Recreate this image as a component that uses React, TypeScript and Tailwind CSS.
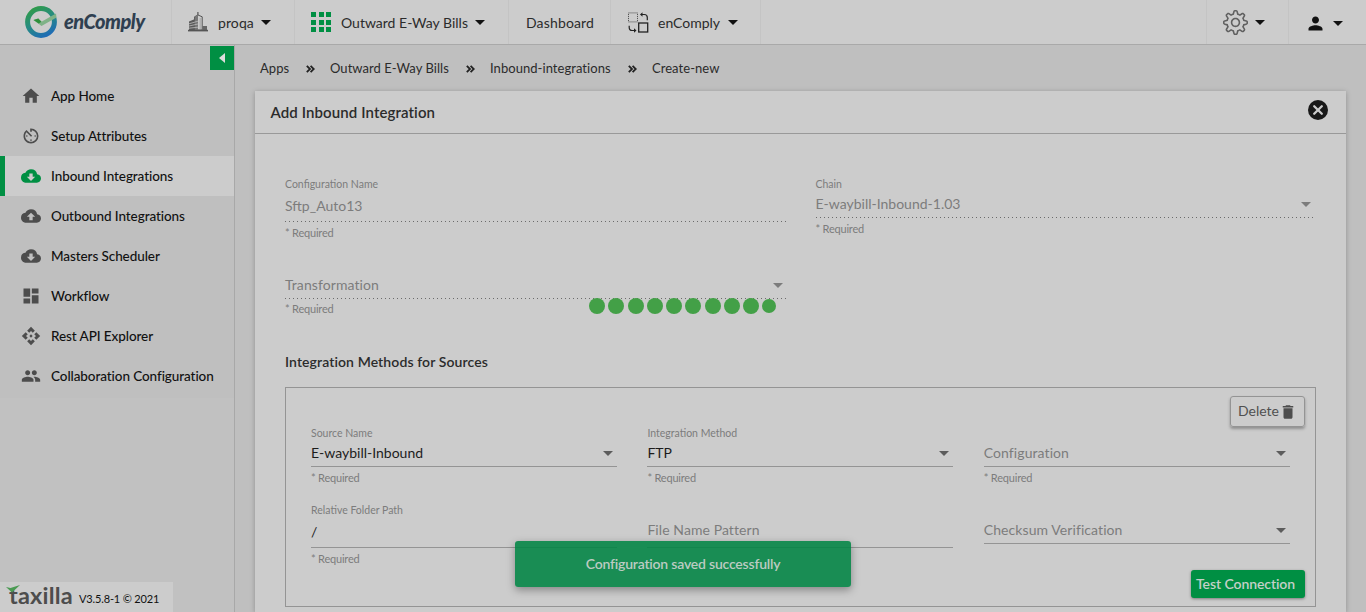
import type { ReactNode } from "react";
import {
  MdApi,
  MdAvTimer,
  MdCloudDownload,
  MdCloudUpload,
  MdDashboard,
  MdDelete,
  MdHome,
  MdPeople,
  MdPerson,
} from "react-icons/md";
import { SlSettings } from "react-icons/sl";

function Caret({ className = "" }: { className?: string }) {
  return (
    <svg viewBox="0 0 10 5" className={`h-[5px] w-[10px] shrink-0 ${className}`}>
      <path d="M0 0h10L5 5z" fill="currentColor" />
    </svg>
  );
}

function EnComplyLogo() {
  return (
    <svg viewBox="0 0 34 32" className="mt-px h-8 w-[34px]">
      <defs>
        <linearGradient id="ring" x1="0.2" y1="0" x2="0.7" y2="1">
          <stop offset="0" stopColor="#2f9a4c" />
          <stop offset="0.5" stopColor="#268b83" />
          <stop offset="1" stopColor="#1f6db4" />
        </linearGradient>
      </defs>
      <circle cx="17" cy="16" r="13.4" fill="none" stroke="url(#ring)" strokeWidth="5" />
      <path d="M9.5 14l4.8-1.6 3.2 3.4L32 7.6l.5 4L17.5 20z" fill="#7fb287" />
      <path d="M9.5 14l4.8-1.6 3.2 3.4-2.8 1.8z" fill="#2e8f3c" />
    </svg>
  );
}

function BuildingIcon() {
  return (
    <svg viewBox="0 0 20 20" className="h-5 w-5">
      <path d="M1 9.5l6-2.5v11H1z" fill="#5a5a5a" />
      <path d="M9.9 0v3" stroke="#555" strokeWidth="1.2" />
      <path d="M6.5 18V4.8L10 3l4.2 1.8V18z" fill="#ccc" stroke="#555" strokeWidth="1" />
      <path d="M6.7 5L10 3.2V18H6.7z" fill="#777" />
      <path d="M12.2 6v11" stroke="#999" strokeWidth=".8" />
      <path d="M14.5 14H19v4h-4.5z" fill="#666" />
      <path d="M1 11.8l9-2.6M1 14l9-2M1 16.2l9-1" stroke="#bbb" strokeWidth=".8" />
      <path d="M0 18.6h20" stroke="#555" strokeWidth="1.6" />
    </svg>
  );
}

function GridIcon() {
  return (
    <div className="grid h-5 w-5 grid-cols-[5px_5px_5px] grid-rows-[5px_5px_5px] content-between justify-between">
      {[0, 1, 2, 3, 4, 5, 6, 7, 8].map((n) => (
        <span key={n} className="bg-[#008f43]" />
      ))}
    </div>
  );
}

function SwapIcon() {
  return (
    <svg viewBox="0 0 21 21" className="h-[21px] w-[21px]" fill="none" stroke="#222">
      <rect x=".5" y=".9" width="9" height="9" strokeWidth=".8" strokeDasharray="1 1" />
      <rect x="10.7" y="11" width="9" height="9" strokeWidth="1.3" />
      <path d="M13.5 2.5h2.8q3 0 3 3v2.8M7 18.5H4.2q-3 0-3-3v-1.8" strokeWidth="1.2" />
      <path d="M14.5 .2v4.6L12 2.5zM6 16.2v4.6l2.5-2.3z" fill="#222" stroke="none" />
    </svg>
  );
}

function CloseIcon() {
  return (
    <svg viewBox="0 0 20 20" className="mb-1 h-5 w-5">
      <circle cx="10" cy="10" r="10" fill="#191919" />
      <path d="M6.2 6.2l7.6 7.6M13.8 6.2l-7.6 7.6" stroke="#ccc" strokeWidth="2.3" strokeLinecap="round" />
    </svg>
  );
}

function Chevrons() {
  return (
    <svg viewBox="0 0 9 8" className="h-2 w-[9px]" fill="none" stroke="#222" strokeWidth="1.8">
      <path d="M.8.8L4 4 .8 7.2M4.6.8L7.8 4 4.6 7.2" />
    </svg>
  );
}

function Header() {
  return (
    <header className="flex h-[45px] shrink-0 border-b border-[#a9a9a9] bg-[#ccc] text-[14px] text-[#2b2b2b]">
      <div className="flex w-[172px] items-center border-r border-[#c4c4c4] pb-px pl-6">
        <EnComplyLogo />
        <span className="ml-[6px] pb-0.5 text-[20px] font-black italic tracking-[-0.5px] text-[#2f3f50]">enComply</span>
      </div>
      <div className="flex w-[123px] items-center border-r border-[#c4c4c4] pl-4">
        <BuildingIcon />
        <span className="ml-[10px] w-[43px] tracking-[0.1px]">proqa</span>
        <Caret className="text-[#111]" />
      </div>
      <div className="flex w-[214px] items-center border-r border-[#c4c4c4] pl-4">
        <GridIcon />
        <span className="ml-[10px] w-[134px] whitespace-nowrap">Outward E-Way Bills</span>
        <Caret className="text-[#111]" />
      </div>
      <div className="flex w-[102px] items-center border-r border-[#c4c4c4] pl-[17px]">
        <span className="tracking-[0.15px]">Dashboard</span>
      </div>
      <div className="flex w-[150px] items-center border-r border-[#c4c4c4] pl-[17px]">
        <SwapIcon />
        <span className="ml-[9px] w-[70px]">enComply</span>
        <Caret className="text-[#111]" />
      </div>
      <div className="ml-auto flex w-[83px] items-center border-x border-[#c4c4c4] pl-4">
        <SlSettings size={25} className="mt-px text-[#606060]" />
        <Caret className="ml-[7px] mt-px text-[#111]" />
      </div>
      <div className="flex w-[77px] items-center pl-4 pt-0.5">
        <MdPerson size={21} className="text-[#111]" />
        <Caret className="ml-[7px] text-[#111]" />
      </div>
    </header>
  );
}

const navItems = [
  { label: "App Home", Icon: MdHome },
  { label: "Setup Attributes", Icon: MdAvTimer },
  { label: "Inbound Integrations", Icon: MdCloudDownload, active: true },
  { label: "Outbound Integrations", Icon: MdCloudUpload },
  { label: "Masters Scheduler", Icon: MdCloudDownload },
  { label: "Workflow", Icon: MdDashboard },
  { label: "Rest API Explorer", Icon: MdApi },
  { label: "Collaboration Configuration", Icon: MdPeople },
];

function Sidebar() {
  return (
    <aside className="flex w-[235px] shrink-0 flex-col border-r border-[#a8a8a8] bg-[#c1c1c1]">
      <div className="bg-[#bfbfbf]">
        <div className="flex h-[31px] justify-end pt-px">
          <button className="flex h-6 w-6 items-center justify-center bg-[#008f43]">
            <svg viewBox="0 0 6 10" className="h-[10px] w-[6px]">
              <path d="M6 0v10L0 5z" fill="#ddd" />
            </svg>
          </button>
        </div>
        <nav className="pb-[2px]">
          {navItems.map(({ label, Icon, active }) => (
            <a
              key={label}
              className={`flex h-10 items-center border-l-[5px] pl-4 text-[13.5px] font-medium text-[#111] ${
                active ? "border-[#008f43] bg-[#ccc]" : "border-transparent"
              }`}
            >
              <Icon size={20} className={active ? "text-[#008f43]" : "text-[#4d4d4d]"} />
              <span className="ml-[10px] whitespace-nowrap leading-5 tracking-[-0.08px]">{label}</span>
            </a>
          ))}
        </nav>
      </div>
      <footer className="mt-auto flex h-[30px] w-[173px] items-center bg-[#ccc] pl-[6px]">
        <div className="relative">
          <span className="block w-[66px] pb-[5px] pl-[3px] text-[23.5px] font-bold leading-[26px] tracking-[0.2px] text-[#4d4d4d]">
            taxilla
          </span>
          <svg viewBox="0 0 14 8" className="absolute left-0 top-[3px] h-2 w-[14px]">
            <path d="M0 2l4.5 1L14 0 6 7.5z" fill="#4a9a52" />
          </svg>
        </div>
        <span className="ml-[7px] whitespace-nowrap pt-1 text-[11px] tracking-[-0.15px] text-[#111]">V3.5.8-1 © 2021</span>
      </footer>
    </aside>
  );
}

type FieldProps = {
  label?: string;
  value?: string;
  placeholder?: string;
  select?: boolean;
  disabled?: boolean;
  required?: boolean;
  tall?: boolean;
};

function Field({ label, value, placeholder, select, disabled, required, tall }: FieldProps) {
  return (
    <div className="flex flex-col text-[#7c7c7c]">
      <div className="h-[14px] text-[10.5px] leading-[14px]">{label}</div>
      <div
        className={`flex items-center justify-between pr-1 text-[14px] ${tall ? "h-[30px]" : "h-[26px]"} ${
          disabled || !value ? "text-[#7c7c7c]" : "text-[#1c1c1c]"
        } ${tall && !value ? "pb-1" : ""}`}
      >
        <span className={`pb-0.5 ${placeholder ? "tracking-[0.08px]" : "tracking-normal"}`}>{value ?? placeholder}</span>
        {select && <Caret className={disabled ? "text-[#7c7c7c]" : "text-[#5c5c5c]"} />}
      </div>
      <div
        className={`h-px ${
          disabled
            ? "bg-[linear-gradient(to_right,#6b6b6b_33%,transparent_0%)] bg-[length:4px_1px] bg-repeat-x"
            : "bg-[#949494]"
        }`}
      />
      {required && (
        <div
          className={`h-[14px] text-[11px] leading-[14px] tracking-[-0.2px] ${
            disabled && !value ? "mt-[3px]" : "mt-1"
          }`}
        >
          * Required
        </div>
      )}
    </div>
  );
}

function Breadcrumbs() {
  const item = (text: string, width: string): ReactNode => (
    <span className={`whitespace-nowrap ${width}`}>{text}</span>
  );
  return (
    <div className="flex h-[46px] items-center pl-[25px] pt-[2px] text-[13px] tracking-[0.05px] text-[#2b2b2b]">
      {item("Apps", "w-[46px]")}
      <Chevrons />
      {item("Outward E-Way Bills", "ml-[15px] w-[136px]")}
      <Chevrons />
      {item("Inbound-integrations", "ml-[15px] w-[138px]")}
      <Chevrons />
      {item("Create-new", "ml-[15px]")}
    </div>
  );
}

export default function App() {
  return (
    <div className="relative flex h-[612px] w-[1366px] flex-col overflow-hidden bg-[#bfbfbf] font-['Lato',sans-serif]">
      <Header />
      <div className="flex min-h-0 flex-1">
        <Sidebar />
        <main className="flex min-w-0 flex-1 flex-col">
          <Breadcrumbs />
          <section className="ml-5 mr-5 flex-1 bg-[#ccc] shadow-[0_1px_5px_rgba(0,0,0,0.25)]">
            <div className="flex h-[43px] items-center justify-between border-b border-[#999] pl-[15.5px] pr-[18px]">
              <h1 className="text-[15px] font-semibold tracking-[0.1px] text-[#2b2b2b]">Add Inbound Integration</h1>
              <CloseIcon />
            </div>
            <div className="px-[30px] pt-[43px]">
              <div className="grid grid-cols-[501.5px_499px] gap-x-[29px] gap-y-[18px]">
                <Field label="Configuration Name" value="Sftp_Auto13" disabled required tall />
                <Field label="Chain" value="E-waybill-Inbound-1.03" disabled required select />
                <Field placeholder="Transformation" disabled required select />
              </div>
              <h2 className="mt-9 h-5 text-[14px] font-semibold leading-5 tracking-[0.1px] text-[#2b2b2b]">
                Integration Methods for Sources
              </h2>
              <div className="mt-[15px] h-[220px] border border-[#949494] pl-[25px] pr-[10px] pt-2">
                <div className="flex h-[30px] justify-end">
                  <button className="flex h-[31px] w-[75px] items-center justify-center rounded-[3px] border border-[#949494] text-[14px] text-[#505050] shadow-[0_2px_3px_rgba(0,0,0,0.3)]">
                    <span className="pb-0.5">Delete</span>
                    <MdDelete size={18} className="text-[#4d4d4d]" />
                  </button>
                </div>
                <div className="grid w-[979px] grid-cols-[306px_306px_306px] grid-rows-[77px_67px] gap-x-[30.4px]">
                  <Field label="Source Name" value="E-waybill-Inbound" required select />
                  <Field label="Integration Method" value="FTP" required select />
                  <Field placeholder="Configuration" required select />
                  <Field label="Relative Folder Path" value="/" required tall />
                  <Field placeholder="File Name Pattern" tall />
                  <Field placeholder="Checksum Verification" select />
                </div>
                <div className="flex justify-end">
                  <button className="flex h-7 w-[114px] items-center rounded-[3px] bg-[#008f43] pb-px pl-[5px] text-[14px] font-semibold tracking-[-0.08px] text-[#c4d0c8] shadow-[0_1px_3px_rgba(0,0,0,0.4)]">
                    Test Connection
                  </button>
                </div>
              </div>
            </div>
          </section>
        </main>
      </div>
      <div className="absolute left-[589px] top-[297px] flex h-[18px] items-center gap-[3.25px]">
        {[0, 1, 2, 3, 4, 5, 6, 7, 8].map((n) => (
          <span key={n} className="h-4 w-4 rounded-full bg-[#43a047]" />
        ))}
        <span className="h-[14px] w-[14px] rounded-full bg-[#43a047]" />
      </div>
      <div className="absolute left-[515px] top-[541px] flex h-[46px] w-[336px] items-center justify-center rounded-[3px] bg-[#008443]/88 pb-0.5 text-[14px] font-semibold tracking-[-0.2px] text-[#bccbc2] shadow-[0_3px_8px_rgba(0,0,0,0.35)]">
        Configuration saved successfully
      </div>
    </div>
  );
}
